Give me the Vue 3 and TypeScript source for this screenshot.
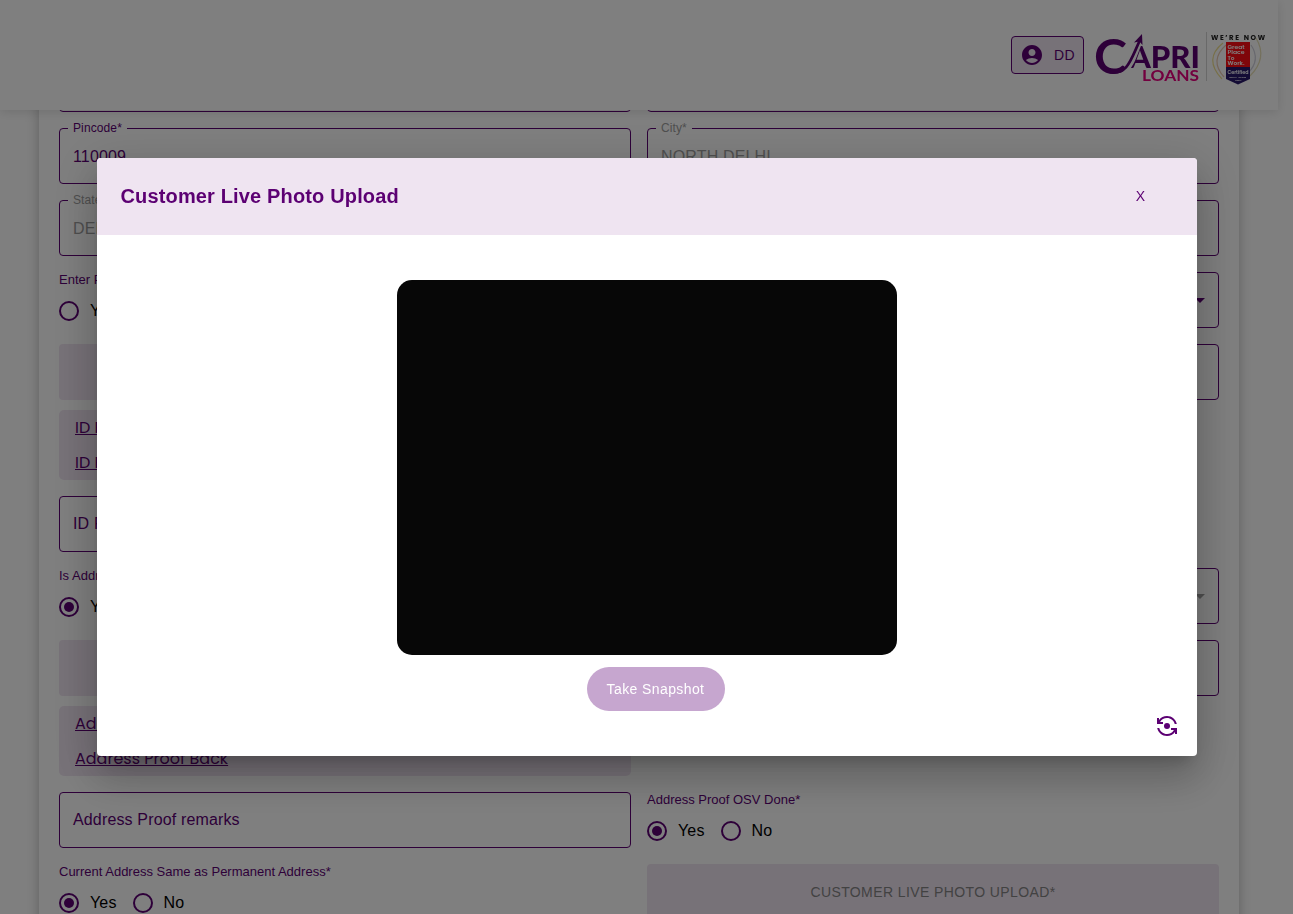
<script setup lang="ts">
type Cell =
  | { kind: 'field'; label?: string; value?: string; placeholder?: string; disabled?: boolean }
  | { kind: 'select'; disabled?: boolean }
  | { kind: 'radio'; label: string; checked: string }
  | { kind: 'upload'; label?: string; links?: string[] }
  | { kind: 'blank' }

const cells: Cell[] = [
  { kind: 'field' },
  { kind: 'field' },
  { kind: 'field', label: 'Pincode*', value: '110009' },
  { kind: 'field', label: 'City*', value: 'NORTH DELHI', disabled: true },
  { kind: 'field', label: 'State*', value: 'DELHI', disabled: true },
  { kind: 'field' },
  { kind: 'radio', label: 'Enter PAN*', checked: '' },
  { kind: 'select' },
  { kind: 'upload', links: ['ID Proof Front', 'ID Proof Back'] },
  { kind: 'field' },
  { kind: 'field', placeholder: 'ID Proof remarks' },
  { kind: 'blank' },
  { kind: 'radio', label: 'Is Address Proof*', checked: 'Yes' },
  { kind: 'select', disabled: true },
  { kind: 'upload', links: ['Address Proof Front', 'Address Proof Back'] },
  { kind: 'field' },
  { kind: 'field', placeholder: 'Address Proof remarks' },
  { kind: 'radio', label: 'Address Proof OSV Done*', checked: 'Yes' },
  { kind: 'radio', label: 'Current Address Same as Permanent Address*', checked: 'Yes' },
  { kind: 'upload', label: 'CUSTOMER LIVE PHOTO UPLOAD*' },
]
</script>

<template>
  <div class="page">
    <header class="topbar">
      <button class="user">
        <svg width="24" height="24" viewBox="0 0 24 24"><path fill="currentColor" d="M12 2C6.480 2 2 6.480 2 12s4.480 10 10 10 10-4.480 10-10S17.520 2 12 2zm0 4c1.930 0 3.500 1.570 3.500 3.500S13.930 13 12 13s-3.500-1.570-3.500-3.500S10.070 6 12 6zm0 14c-2.030 0-4.430-.820-6.140-2.880a9.950 9.950 0 0 1 12.280 0C16.430 19.180 14.030 20 12 20z" /></svg>
        <span>DD</span>
      </button>
      <svg class="logo" width="176" height="60" viewBox="0 0 176 60">
        <g fill="#5c0073" font-family="Lato, sans-serif">
          <text x="1" y="45.500" font-size="48" font-weight="700" textLength="33" lengthAdjust="spacingAndGlyphs">C</text>
          <text x="36" y="40" font-size="30.500" font-weight="900" textLength="71" lengthAdjust="spacingAndGlyphs">APRI</text>
        </g>
        <path d="M31 44C39 37 42 25 46.500 14" fill="none" stroke="#fff" stroke-width="5.500" />
        <path d="M17 44.200C35 47 38 31 47 12" fill="none" stroke="#5c0073" stroke-width="2.800" />
        <path d="M49 6L49.500 17L46.500 13.500L41 14.500Z" fill="#5c0073" />
        <text x="49" y="53" fill="#e6007e" font-family="Lato, sans-serif" font-weight="700" font-size="15.500" textLength="57" lengthAdjust="spacingAndGlyphs">LOANS</text>
        <path d="M113.500 4V53" stroke="#d2d2d2" />
        <g fill="none" stroke-width="1.200">
          <path d="M130 15Q110 31 129 51" stroke="#f0e090" />
          <path d="M133 17Q116 32 131 49" stroke="#e8c8b0" />
          <path d="M157 48Q175 30 163 10" stroke="#e8e0b8" />
          <path d="M155 45Q168 32 158 17" stroke="#d0d0dc" />
        </g>
        <text x="118" y="11.500" fill="#222" font-family="Poppins, Lato, sans-serif" font-weight="700" font-size="7" textLength="54">WE’RE NOW</text>
        <path d="M133 14H157V40H133Z" fill="#ff0d14" />
        <path d="M133 39H157V51L145 56.500L133 51Z" fill="#29196b" />
        <g fill="#fff" font-family="Poppins, Lato, sans-serif" font-weight="600">
          <g font-size="5.800">
            <text x="134.500" y="20.500" textLength="17" lengthAdjust="spacingAndGlyphs">Great</text>
            <text x="134.500" y="26" textLength="17" lengthAdjust="spacingAndGlyphs">Place</text>
            <text x="134.500" y="31.500" textLength="7" lengthAdjust="spacingAndGlyphs">To</text>
            <text x="134.500" y="37" textLength="17" lengthAdjust="spacingAndGlyphs">Work.</text>
          </g>
          <text x="134.500" y="45.500" font-size="5.200" textLength="21" lengthAdjust="spacingAndGlyphs">Certified</text>
          <text x="136" y="49.500" font-size="2.400" textLength="17" lengthAdjust="spacingAndGlyphs">FEB 2024 - FEB 2025</text>
          <text x="142" y="53" font-size="2.400">INDIA</text>
        </g>
      </svg>
    </header>

    <main class="card">
      <div v-for="(c, i) in cells" :key="i" class="cell">
        <fieldset v-if="c.kind === 'field'" class="field" :class="{ disabled: c.disabled, labelled: c.label }">
          <legend v-if="c.label"><span>{{ c.label }}</span></legend>
          <span class="value">{{ c.value || c.placeholder }}</span>
        </fieldset>

        <div v-else-if="c.kind === 'select'" class="select" :class="{ disabled: c.disabled }">
          <svg width="24" height="24" viewBox="0 0 24 24"><path d="M7 10l5 5 5-5z" fill="currentColor" /></svg>
        </div>

        <div v-else-if="c.kind === 'radio'" class="group">
          <div class="caption">{{ c.label }}</div>
          <div class="options">
            <div v-for="o in ['Yes', 'No']" :key="o" class="option">
              <svg width="20" height="20" viewBox="0 0 20 20">
                <circle cx="10" cy="10" r="9" fill="none" stroke="currentColor" stroke-width="2" />
                <circle v-if="c.checked === o" cx="10" cy="10" r="5" fill="currentColor" />
              </svg>
              <span>{{ o }}</span>
            </div>
          </div>
        </div>

        <template v-else-if="c.kind === 'upload'">
          <div class="upload">{{ c.label }}</div>
          <div v-if="c.links" class="links">
            <a v-for="l in c.links" :key="l">{{ l }}</a>
          </div>
        </template>
      </div>
    </main>

    <div class="backdrop">
      <section class="dialog">
        <div class="dialog-head">
          <h2>Customer Live Photo Upload</h2>
          <button class="close">X</button>
        </div>
        <div class="dialog-body">
          <div class="video"></div>
          <button class="snap">Take Snapshot</button>
          <button class="flip">
            <svg width="24" height="24" viewBox="0 0 24 24">
              <circle cx="12" cy="12" r="3" fill="currentColor" />
              <path fill="currentColor" d="M8 10V8H5.090C6.470 5.610 9.050 4 12 4c3.720 0 6.850 2.560 7.740 6h2.060c-.930-4.560-4.960-8-9.800-8-3.270 0-6.180 1.580-8 4.010V4H2v6h6zM16 14v2h2.910c-1.380 2.390-3.960 4-6.910 4-3.720 0-6.850-2.560-7.740-6H2.200c.930 4.560 4.960 8 9.800 8 3.270 0 6.180-1.580 8-4.010V20h2v-6h-6z" />
            </svg>
          </button>
        </div>
      </section>
    </div>
  </div>
</template>

<style>
body {
  margin: 0;
  overflow: hidden;
}
</style>

<style scoped>
.page {
  --purple: #5c0073;
  --tint: #efe4f1;
  box-sizing: border-box;
  height: 914px;
  padding: 0 54px 0 39px;
  overflow: hidden;
  background: #fff;
  color: var(--purple);
  font-family: "Liberation Sans", Arial, sans-serif;
  font-size: 16px;
}
button {
  font: inherit;
  color: inherit;
  border: 0;
  background: none;
  padding: 0;
}
.topbar {
  position: fixed;
  z-index: 1;
  top: 0;
  left: 0;
  width: 1278px;
  height: 110px;
  box-sizing: border-box;
  padding-right: 9px;
  display: flex;
  align-items: center;
  justify-content: flex-end;
  gap: 9px;
  background: #fff;
  box-shadow: 0 2px 10px rgba(0, 0, 0, 0.12);
}
.logo {
  margin-top: 6px;
}
.user {
  display: flex;
  align-items: center;
  gap: 10px;
  box-sizing: border-box;
  width: 73px;
  height: 38px;
  padding-left: 8px;
  border: 1px solid var(--purple);
  border-radius: 4px;
  background: var(--tint);
  font-size: 14px;
  letter-spacing: 0.4px;
}
.card {
  display: grid;
  grid-template-columns: 1fr 1fr;
  gap: 16px;
  padding: 56px 20px 20px;
  box-shadow: 0 0 12px rgba(0, 0, 0, 0.25);
}
.cell {
  min-width: 0;
  min-height: 56px;
}
.field,
.select {
  box-sizing: border-box;
  height: 56px;
  margin: 0;
  border: 1px solid var(--purple);
  border-radius: 4px;
  padding: 0 13px;
  line-height: 54px;
  letter-spacing: 0.15px;
}
.labelled {
  height: 62px;
  margin-top: -6px;
  padding: 0 8px;
}
.labelled .value {
  display: block;
  padding-left: 5px;
  line-height: 45px;
}
legend {
  height: 12px;
  line-height: 12px;
  padding: 0 5px;
  font-size: 12px;
  letter-spacing: 0.11px;
}
.disabled {
  color: #9e9e9e;
}
.select {
  display: flex;
  justify-content: flex-end;
  align-items: center;
  padding-right: 6px;
}
.caption {
  font-size: 13px;
  line-height: 15px;
}
.options {
  display: flex;
  gap: 16px;
  margin-top: 13px;
}
.option {
  display: flex;
  align-items: center;
  gap: 11px;
  height: 22px;
  letter-spacing: 0.15px;
}
.option span {
  color: #000;
}
.upload {
  height: 56px;
  border-radius: 4px;
  background: var(--tint);
  color: #858585;
  font-size: 14px;
  line-height: 56px;
  letter-spacing: 0.4px;
  text-align: center;
}
.links {
  display: flex;
  flex-direction: column;
  align-items: flex-start;
  height: 70px;
  margin-top: 10px;
  padding-left: 16px;
  border-radius: 5px;
  background: var(--tint);
  font-family: Poppins, Inter, sans-serif;
  line-height: 35px;
}
.links a {
  text-decoration: underline;
}
.backdrop {
  position: fixed;
  z-index: 2;
  inset: 0;
  display: flex;
  align-items: center;
  justify-content: center;
  background: rgba(0, 0, 0, 0.5);
}
.dialog {
  width: 1100px;
  height: 598px;
  border-radius: 4px;
  overflow: hidden;
  background: #fff;
  box-shadow: 0 11px 15px -7px rgba(0, 0, 0, 0.2), 0 24px 38px 3px rgba(0, 0, 0, 0.14), 0 9px 46px 8px rgba(0, 0, 0, 0.12);
}
.dialog-head {
  display: flex;
  align-items: center;
  justify-content: space-between;
  height: 77px;
  padding: 0 51px 0 24px;
  background: var(--tint);
}
h2 {
  margin: 0;
  font-size: 20px;
  letter-spacing: 0.15px;
}
.close {
  margin-top: -2px;
  font-size: 14px;
  letter-spacing: 0.4px;
}
.dialog-body {
  display: flex;
  flex-direction: column;
  align-items: center;
  padding-top: 45px;
}
.video {
  width: 500px;
  height: 375px;
  border-radius: 15px;
  background: #070707;
}
.snap {
  width: 138px;
  height: 44px;
  margin: 12px 0 0 18px;
  border-radius: 22px;
  background: #c6a6cf;
  color: #fff;
  font-size: 14px;
  letter-spacing: 0.4px;
}
.flip {
  align-self: flex-end;
  height: 24px;
  margin: 3px 17.5px 0 0;
}
.flip svg {
  display: block;
}
</style>
